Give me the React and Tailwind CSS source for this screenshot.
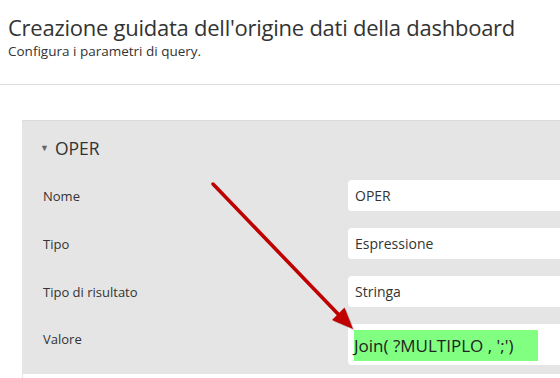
import React from 'react'

const rows = [
    { label: 'Nome', value: 'OPER' },
    { label: 'Tipo', value: 'Espressione' },
    { label: 'Tipo di risultato', value: 'Stringa' },
]

const Arrow = () => (
    <svg
        className="absolute left-0 top-0 pointer-events-none"
        width="560"
        height="378"
        viewBox="0 0 560 378"
    >
        <line x1="213" y1="184" x2="339" y2="315" stroke="#00000030" strokeWidth="3.5" transform="translate(1.5,1.5)" />
        <polygon points="353,329 332,320 344.5,307.5" fill="#00000030" transform="translate(1.5,1.5)" />
        <line x1="213" y1="184" x2="339" y2="315" stroke="#c00000" strokeWidth="3.5" strokeLinecap="round" />
        <polygon points="353,329 332,320 344.5,307.5" fill="#c00000" />
    </svg>
)

const App = () => {
    return (
        <div
            className="relative w-[560px] h-[378px] overflow-hidden bg-white text-[#333]"
            style={{ fontFamily: '"Open Sans", "Noto Sans", sans-serif' }}
        >
            {/* Header */}
            <div className="px-2 pt-[13px] h-[84px]">
                <h1 className="text-[22px] leading-[28px] text-[#333] tracking-[-0.25px]">
                    Creazione guidata dell'origine dati della dashboard
                </h1>
                <p className="text-[13.5px] leading-[18px] text-[#333] mt-[1px]">
                    Configura i parametri di query.
                </p>
            </div>
            <div className="border-t border-[#dddddd]" />

            {/* Panel */}
            <div className="ml-[22px] mt-[35px] border-t border-[#dcdcdc] bg-[#e5e5e5] w-[600px]">
                <div className="flex items-center h-[59px] pl-[18px] pb-[5px]">
                    <span className="text-[9px] text-[#666] mr-[6px]">▼</span>
                    <span className="text-[17.5px] text-[#333]">OPER</span>
                </div>
                <div className="flex flex-col gap-[17px] pb-[9px]">
                    {rows.map((row) => (
                        <div key={row.label} className="flex items-center">
                            <div className="w-[326px] pl-[21px] pt-[3px] text-[13px]">{row.label}</div>
                            <div className="flex-1 h-[31px] bg-white rounded-[4px] flex items-center pl-[7px] text-[14px]">
                                {row.value}
                            </div>
                        </div>
                    ))}
                    <div className="flex items-start">
                        <div className="w-[326px] pl-[21px] pt-[6px] text-[13px]">Valore</div>
                        <div className="flex-1 h-[41px] bg-white rounded-[4px] pl-[6px] pt-[6px]">
                            <div className="w-[184px] h-[31px] bg-[#80ff80] flex items-center text-[17px] text-[#222] whitespace-nowrap">
                                Join( ?MULTIPLO , ';')
                            </div>
                        </div>
                    </div>
                </div>
            </div>
            <div className="ml-[22px] h-[10px] border-l border-[#e5e5e5] bg-white" />

            <Arrow />
        </div>
    )
}

export default App
